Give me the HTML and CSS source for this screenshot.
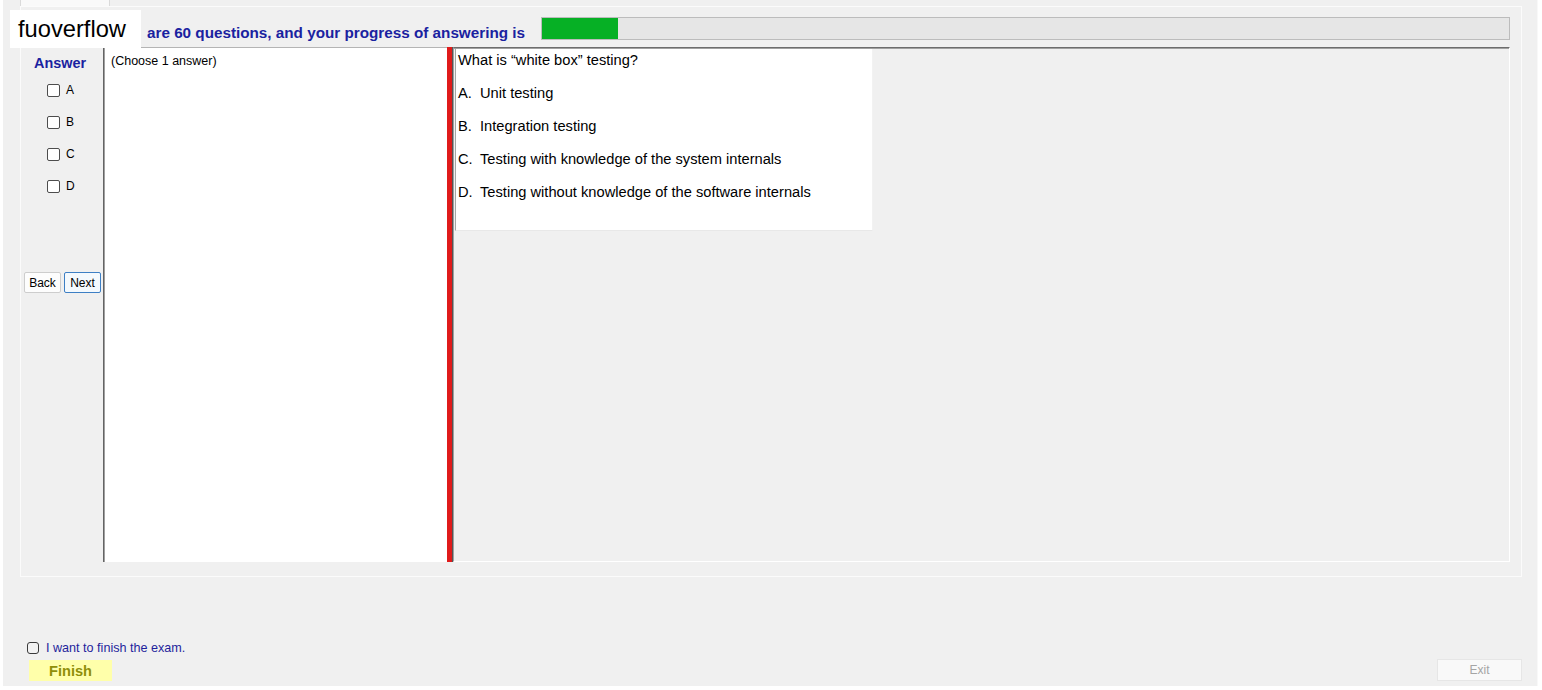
FILE: index.html
```html
<!DOCTYPE html>
<html lang="en">
<head>
    <meta charset="UTF-8">
    <meta name="viewport" content="width=device-width, initial-scale=1.0">
    <title>Exam</title>
    <link rel="stylesheet" href="styles.css">
</head>
<body>
    <div class="window">
        <div class="tabstrip"><div class="tab"></div></div>
        <div class="tabpage">
            <div class="header">
                <span class="progress-text">are 60 questions, and your progress of answering is</span>
                <div class="progress"><div class="progress-fill" style="width:76px"></div></div>
            </div>
            <div class="main">
                <div class="answer-col">
                    <div class="answer-title">Answer</div>
                    <label class="choice"><span class="box"></span>A</label>
                    <label class="choice"><span class="box"></span>B</label>
                    <label class="choice"><span class="box"></span>C</label>
                    <label class="choice"><span class="box"></span>D</label>
                    <div class="nav">
                        <button class="btn">Back</button>
                        <button class="btn btn-next">Next</button>
                    </div>
                </div>
                <div class="hint-box">(Choose 1 answer)</div>
                <div class="splitter"></div>
                <div class="question-panel">
                    <div class="question-box">
                        <div class="question">What is “white box” testing?</div>
                        <div class="options">
                            <div class="option"><span class="opt-key">A.</span>Unit testing</div>
                            <div class="option"><span class="opt-key">B.</span>Integration testing</div>
                            <div class="option"><span class="opt-key">C.</span>Testing with knowledge of the system internals</div>
                            <div class="option"><span class="opt-key">D.</span>Testing without knowledge of the software internals</div>
                        </div>
                    </div>
                </div>
            </div>
        </div>
        <div class="footer">
            <div class="finish-col">
                <label class="confirm"><span class="box box-light"></span>I want to finish the exam.</label>
                <button class="btn-finish">Finish</button>
            </div>
            <button class="btn-exit">Exit</button>
        </div>
    </div>
    <!-- watermark sits over the header -->
    <div class="watermark">fuoverflow</div>
</body>
</html>
```
FILE: styles.css
```css
* {
    margin: 0;
    padding: 0;
    box-sizing: border-box;
}
body {
    background: #fff;
    font-family: "Liberation Sans", Arial, sans-serif;
    font-size: 12px;
    color: #000;
}
button {
    font-family: "Liberation Sans", Arial, sans-serif;
    cursor: pointer;
}
.window {
    margin-left: 3px;
    width: 1535px;
    height: 686px;
    background: #f0f0f0;
    border-right: 1px solid #f8f8f8;
    display: flex;
    flex-direction: column;
}
.tabstrip {
    height: 6px;
    padding-left: 17px;
}
.tab {
    width: 90px;
    height: 6px;
    background: #f9f9f9;
    border-left: 1px solid #dadada;
    border-right: 1px solid #dadada;
}
.tabpage {
    margin-left: 17px;
    width: 1502px;
    height: 571px;
    border: 1px solid #fbfbfb;
    padding: 10px 11px 14px 1px;
    display: flex;
    flex-direction: column;
    gap: 7px;
}
.header {
    height: 23px;
    display: flex;
    align-items: center;
    padding-left: 125px;
}
.progress-text {
    margin-top: 7px;
    font-size: 15.25px;
    font-weight: bold;
    color: #1a22a0;
}
.progress {
    margin-left: auto;
    width: 969px;
    height: 23px;
    border: 1px solid #bcbcbc;
    background: #e6e6e6;
}
.progress-fill {
    height: 100%;
    background: #06b025;
}
.main {
    height: 515px;
    display: flex;
}
.answer-col {
    width: 81px;
    padding-top: 7px;
    display: flex;
    flex-direction: column;
}
.answer-title {
    height: 18px;
    line-height: 18px;
    margin-bottom: 2px;
    padding-left: 12px;
    font-size: 14.4px;
    font-weight: bold;
    color: #1a22a0;
}
.choice {
    height: 32px;
    display: flex;
    align-items: center;
    gap: 6px;
    padding-left: 25px;
    font-size: 12px;
}
.box {
    width: 13px;
    height: 13px;
    border: 1px solid #4d4d4d;
    border-radius: 2px;
    background: #fff;
}
.nav {
    margin-top: 70px;
    padding-left: 2px;
    display: flex;
    gap: 3px;
}
.btn {
    width: 37px;
    height: 21px;
    border: 1px solid #cdcdcd;
    border-radius: 2px;
    background: #fdfdfd;
    font-size: 12px;
    color: #000;
}
.btn-next {
    border-color: #3d7fc4;
    background: #f4f9fd;
}
.hint-box {
    width: 344px;
    background: #fff;
    border-left: 1px solid #646464;
    border-top: 1px solid #b4b4b4;
    box-shadow: inset 1px 0 0 #a0a0a0;
    padding: 6px 0 0 7px;
    font-size: 12.5px;
}
.splitter {
    width: 6px;
    background: #e01b1b;
    border-right: 1px solid #555;
}
.question-panel {
    flex: 1;
    border-top: 1px solid #6d6d6d;
    box-shadow: inset 0 1px 0 #a0a0a0;
    padding-top: 1px;
    border-left: 1px solid #a0a0a0;
    border-right: 1px solid #fff;
    border-bottom: 1px solid #fff;
    padding-left: 1px;
}
.question-box {
    width: 418px;
    height: 182px;
    background: #fff;
    border-left: 1px solid #a5a5a5;
    border-right: 1px solid #f2f2f2;
    border-bottom: 1px solid #e8e8e8;
    padding-left: 2px;
    font-size: 14.67px;
}
.question {
    line-height: 20px;
    padding-top: 1px;
}
.options {
    margin-top: 7px;
}
.option {
    height: 33px;
    line-height: 33px;
}
.opt-key {
    display: inline-block;
    width: 22px;
}
.footer {
    flex: 1;
    display: flex;
    justify-content: space-between;
    align-items: flex-end;
    padding: 0 15px 5px 24px;
}
.finish-col {
    display: flex;
    flex-direction: column;
}
.confirm {
    height: 17px;
    margin-bottom: 4px;
    display: flex;
    align-items: center;
    gap: 7px;
    font-size: 12.6px;
    color: #1f1f9c;
}
.box-light {
    width: 12px;
    height: 12px;
    border-color: #3a3a3a;
    border-radius: 3px;
    background: #f2f2f2;
}
.btn-finish {
    margin-left: 2px;
    width: 83px;
    height: 21px;
    border: none;
    background: #ffffaa;
    font-size: 14.6px;
    font-weight: bold;
    color: #8f8f0a;
}
.btn-exit {
    width: 85px;
    height: 22px;
    border: 1px solid #e6e6e6;
    background: #f9f9f9;
    font-size: 12px;
    color: #a5a5a5;
}
.watermark {
    position: absolute;
    left: 10px;
    top: 10px;
    width: 131px;
    height: 38px;
    padding: 1px 0 0 8px;
    line-height: 37px;
    background: #fff;
    font-size: 23.7px;
    color: #000;
}
```
